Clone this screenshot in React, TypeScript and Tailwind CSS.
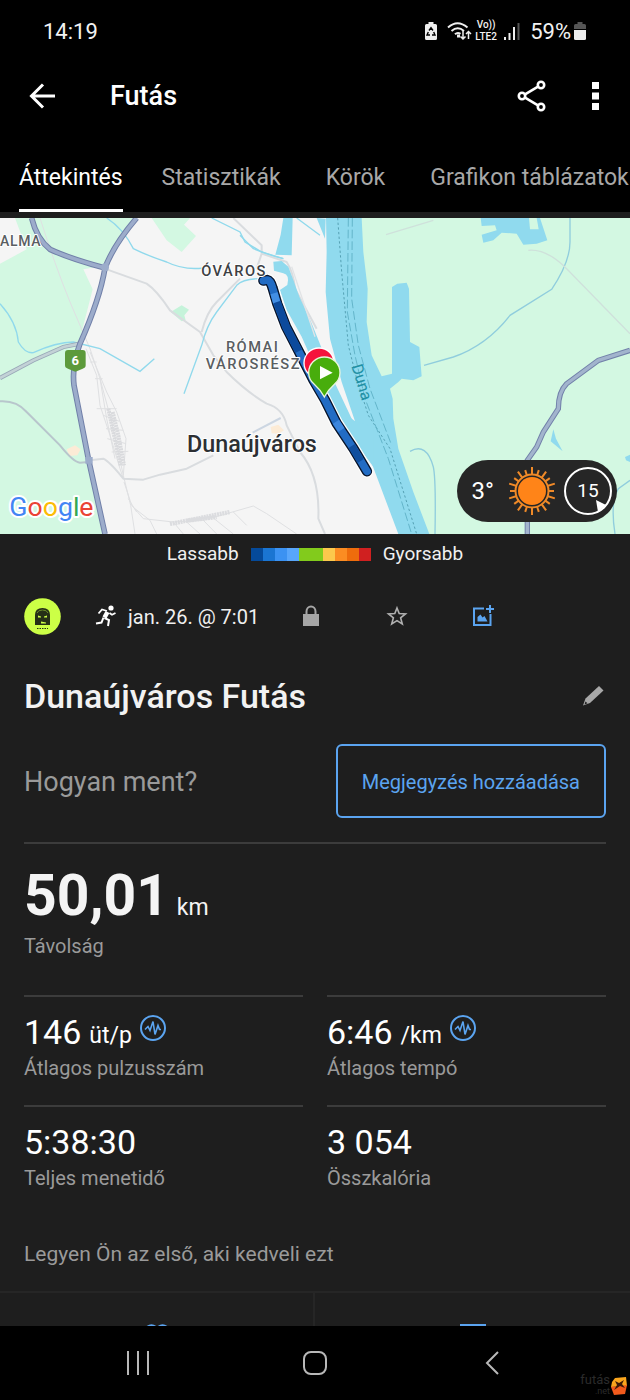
import React from "react";

const tabs = ["Áttekintés", "Statisztikák", "Körök", "Grafikon táblázatok"];

const paceColors = [
    "bg-[#054a9a]",
    "bg-[#1a75d2]",
    "bg-[#3b92f2]",
    "bg-[#58a6fb]",
    "bg-[#82cb1c]",
    "bg-[#82cb1c]",
    "bg-[#fcc84c]",
    "bg-[#fb8c22]",
    "bg-[#ee6c0c]",
    "bg-[#d02020]",
];

const stats = [
    { value: "146", unit: "üt/p", label: "Átlagos pulzusszám", chart: true },
    { value: "6:46", unit: "/km", label: "Átlagos tempó", chart: true },
    { value: "5:38:30", label: "Teljes menetidő" },
    { value: "3 054", label: "Összkalória" },
];

const StatusBar = () => (
    <div className="flex h-[62px] shrink-0 items-center justify-between pl-[43px] pr-[44px] text-[#f2f2f2]">
        <span className="text-[22px]">14:19</span>
        <div className="flex items-center">
            <svg className="mr-2.5 h-5 w-3" viewBox="0 0 12 20">
                <path d="M3.500 1h5v2h2q1.500 0 1.500 1.500v13q0 1.500-1.500 1.500h-9Q0 19 0 17.500v-13Q0 3 1.500 3h2z" fill="#eee" />
                <path d="M4 9.500 6 6.800l2 2.700M3.300 11l-1.300 3h3M8.700 11l1.300 3h-3" fill="none" stroke="#000" strokeWidth="1.400" />
            </svg>
            <svg className="h-5 w-[25px]" viewBox="0 0 25 20" fill="none" stroke="#eee" strokeWidth="2">
                <path d="M1 6.500q9.500-8.500 19.500 0M4.500 10q6.300-5.400 12.500 0M8 13.300q2.500-2.500 5.500-.5" />
                <path d="M10 15h3" strokeWidth="3" />
                <path d="M16 10v8m-2.500-2.500L16 18l2.500-2.500M21.500 18v-7.500m-2.500 2.500 2.500-2.500L24 13" strokeWidth="1.500" />
            </svg>
            <div className="mr-1.5 ml-0.5 flex w-6 flex-col items-center text-[10px] leading-3 font-medium">
                <span>Vo))</span>
                <span>LTE2</span>
            </div>
            <svg className="mr-2.5 h-[18px] w-4" viewBox="0 0 16 18" fill="#eee">
                <path d="M0 15h2v3H0zM4.500 11h2v7h-2zM9 5h2v13H9z" />
                <path d="M13.500 1h2v17h-2z" fill="#555" />
            </svg>
            <span className="mr-[3px] text-[22px]">59%</span>
            <svg className="h-5 w-3" viewBox="0 0 12 20">
                <path d="M3.500 1h5v2h2Q12 3 12 4.500V8H0V4.500Q0 3 1.500 3h2z" fill="#555" />
                <path d="M0 9h12v8.500q0 1.500-1.500 1.500h-9Q0 19 0 17.500z" fill="#eee" />
            </svg>
        </div>
    </div>
);

const Header = () => (
    <header className="flex h-[68px] shrink-0 items-center pr-[31px] pl-[29px]">
        <button aria-label="Vissza">
            <svg className="h-7 w-[26px]" viewBox="0 0 26 28" fill="none" stroke="#fff" strokeWidth="3">
                <path d="M26 14H3M14 2.500 2.500 14 14 25.500" />
            </svg>
        </button>
        <h1 className="ml-[55px] flex-1 text-[27px] font-medium">Futás</h1>
        <button aria-label="Megosztás">
            <svg className="h-8 w-[30px]" viewBox="0 0 30 32" fill="none" stroke="#fff" strokeWidth="2.600">
                <circle cx="5" cy="16" r="3.200" />
                <circle cx="24" cy="5" r="3.200" />
                <circle cx="24" cy="27" r="3.200" />
                <path d="M8 14.300 21 6.700M8 17.700 21 25.300" />
            </svg>
        </button>
        <button aria-label="Továbbiak" className="ml-[45px]">
            <svg className="h-7 w-[7px]" viewBox="0 0 7 28" fill="#fff">
                <path d="M0 0h7v7H0zM0 10.500h7v7H0zM0 21h7v7H0z" />
            </svg>
        </button>
    </header>
);

const TabBar = () => (
    <nav className="flex h-[82px] shrink-0 gap-[45px] overflow-hidden pl-[19px]">
        {tabs.map((tab, i) => (
            <button
                key={tab}
                className={`h-full shrink-0 border-b-[3px] pt-[18px] text-[23px] whitespace-nowrap ${
                    i === 0 ? "-mr-1.5 border-white text-white" : "border-transparent text-[#a8a8a8]"
                }`}
            >
                {tab}
            </button>
        ))}
    </nav>
);

const RouteMap = () => (
    <svg className="block h-[316px] w-full" viewBox="0 0 1890 948" preserveAspectRatio="xMidYMid slice" fill="none">
        <rect width="1890" height="948" fill="#f5f5f5" />

        {/* west side: fields, parks, roads */}
        <g transform="translate(0 -18)">
            <path d="M45 18H410L320 160 250 172 278 232 235 400 222 520 315 966H0V155L80 112z" fill="#d3f8e2" />
            <path d="M455 18H570L552 38 588 72 545 120 500 85z" fill="#d3f8e2" />
            <path d="M512 300 545 280 567 293 553 310 557 325 545 328z" fill="#c5f3da" />
            <path d="M200 712 225 700 242 712 232 730 208 732zM812 645 835 638 852 655 835 665 815 664z" fill="#fcebd6" />

            <g stroke="#dfe0e2" strokeWidth="3">
                <path d="M120 18Q165 160 210 270L270 410 300 500 335 630 370 790 392 880 405 966" />
                <path d="M258 410 290 490 300 580 330 670 360 770 370 800M270 420 320 540 350 600 378 680 370 790M300 500 320 620 345 740M290 590 350 590M310 610 358 628M318 650 370 655M322 680 378 695M335 720 385 718M270 450H290M285 500H308" />
                <path d="M372 810 395 880 430 920 520 930 610 925 760 882 800 905 890 966M405 890 450 925 470 966M520 930 550 966M560 930 600 966M610 925 650 966M640 918 700 966M700 900 740 940M385 860 410 900" />
            </g>
            <path d="M325 590 340 660 362 760M338 600 355 670 372 760" stroke="#d9dadd" strokeWidth="12" strokeDasharray="6 2" />
            <path d="M510 936 600 918 690 900M560 926 650 915" stroke="#dbdcdf" strokeWidth="13" strokeDasharray="6 2" />

            <g stroke="#d9dcdf" strokeWidth="6" strokeLinejoin="round">
                <path d="M320 172 440 215Q470 235 510 295L600 360 640 430 680 480Q740 540 800 575 850 590 860 640L900 720Q960 790 955 920L975 966" />
                <path d="M605 360Q620 300 650 270L720 200M785 125 770 170M700 18 785 100V125L860 150Q880 180 885 230L950 350" />
                <path d="M270 745 310 740Q330 750 370 800L430 803 480 788 560 770 640 730" />
            </g>
            <path d="M758 662 842 618" stroke="#ccd6e2" strokeWidth="6" />
            <path d="M0 568Q50 565 80 600L180 700Q220 750 240 752L265 750" stroke="#b8c6cc" strokeWidth="6" />

            <g stroke="#90d9ec" strokeWidth="4">
                <path d="M320 18Q370 50 400 110 440 130 500 150 550 175 610 168" />
                <path d="M0 275Q50 330 55 390 75 425 100 422 170 390 220 390L300 410 420 478 463 440" />
                <path d="M780 200Q730 200 710 220L650 300Q620 340 605 400L552 545M635 18 720 60 735 90 785 120 850 140" />
                <path d="M850 140Q810 130 760 110L720 70M890 18 960 70" />
            </g>

            <path d="M0 498 100 445 190 405 240 395" stroke="#98a7b7" strokeWidth="13" />
            <path d="M0 498 100 445 190 405 240 395" stroke="#c3d2d6" strokeWidth="8" />
            <path d="M95 18Q110 80 150 112 210 140 315 168M410 18Q340 100 315 168 300 260 240 395 215 460 222 520L265 740 315 966" stroke="#7180a9" strokeWidth="17" />
            <path d="M95 18Q110 80 150 112 210 140 315 168M410 18Q340 100 315 168 300 260 240 395 215 460 222 520L265 740 315 966" stroke="#9caccb" strokeWidth="11" />
            <circle cx="315" cy="166" r="12" fill="#9caccb" />
            <path d="M256 735 278 735 278 755 256 755z" fill="#9caccb" />
        </g>

        {/* east bank and the river */}
        <g transform="translate(930 -18)">
            <path d="M100 18H960V966H300L160 640 120 480 100 300z" fill="#d3f8e2" />
            <path
                d="M48 18 50 120 47 240 60 380 95 510 135 628 100 600 180 740 265 966H358L310 840 265 710 250 620 248 560 240 530 265 510 275 500 310 505 335 493 328 405 300 390 297 230 290 212 262 215 246 225V485L215 493 185 430 170 330 173 230 160 120 155 18z"
                fill="#90daee"
            />
            <path d="M512 18H690L712 85 680 95 640 98 620 65 575 62 550 85 520 92 515 68 560 55 555 40 515 42z" fill="#90daee" />
            <path d="M657 18H680L686 52H660z" fill="#d3f8e2" />
            <path d="M730 652 738 680 758 718 722 688zM945 735 960 728V750L948 745z" fill="#90daee" />
            <path d="M780 18V90Q780 150 725 232L600 310Q530 400 430 435L342 460M960 805 925 830Q900 870 915 966M300 718Q350 690 370 765 378 800 375 966" stroke="#90cddd" strokeWidth="4" />
            <path d="M655 115Q710 110 770 170L960 365M228 68 370 25" stroke="#cfe1db" strokeWidth="4" />
            <path d="M83 18 95 180 115 400 140 500 175 610 240 710 320 966" stroke="#55a1b4" strokeWidth="3" strokeDasharray="7 7" />
            <path d="M115 18 112 300 135 430 165 560 235 740 305 966M127 18 125 260 145 400 180 530 245 700" stroke="#63b5ca" strokeWidth="3" strokeDasharray="26 9" />
            <path d="M960 415 865 445 770 515Q745 540 745 590L700 660 680 705 652 745V966" stroke="#7180a9" strokeWidth="16" />
            <path d="M960 415 865 445 770 515Q745 540 745 590L700 660 680 705 652 745V966" stroke="#a2b4cd" strokeWidth="10" />
            <path d="M20 18 45 80 47 20z" fill="#90daee" />
        </g>
        <path d="M850 0H878L875 112 826 110 842 50z" fill="#90daee" />

        {/* harbour and the recorded track */}
        <g transform="translate(690 126)">
            <path d="M130 5 155 3 175 20 190 60 208 110 245 190 275 265 315 370 368 482 430 500V620L370 540 290 400 215 230 170 150 150 90 172 75Q180 45 160 40L132 32z" fill="#90daee" />
            <path d="M185 20 215 110 255 230" stroke="#e2e4e6" strokeWidth="4" />
            <path d="M100 62 112 60Q122 62 128 85L142 132 168 200 212 285 250 360 285 420 320 490 370 565 411 634" stroke="#fff" strokeWidth="38" strokeLinejoin="round" strokeLinecap="round" />
            <path d="M100 62 112 60Q122 62 128 85L142 132 168 200 212 285 250 360 285 420 320 490 370 565 411 634" stroke="#08142a" strokeWidth="31" strokeLinejoin="round" strokeLinecap="round" />
            <path d="M100 62 112 60Q122 62 128 85L142 132 168 200 212 285 250 360 285 420 320 490 370 565 411 634" stroke="#226cc4" strokeWidth="23" strokeLinejoin="round" strokeLinecap="round" />
            <path d="M132 100 140 128" stroke="#428ee4" strokeWidth="22" />
            <path d="M141 126 168 200 206 274" stroke="#0c4a9c" strokeWidth="23" />
            <path d="M318 485 334 510" stroke="#3c86de" strokeWidth="22" />
            <path d="M365 558 392 603" stroke="#104f9f" strokeWidth="22" />
            <circle cx="267" cy="309" r="47" fill="#fff" />
            <circle cx="267" cy="309" r="43" fill="#f5133c" />
            <path d="M283 411Q272 390 252 372 236 358 236 338A47 47 0 0 1 330 338Q330 358 314 372 294 390 283 411z" fill="#48ad0c" stroke="#e9f6df" strokeWidth="4" />
            <path d="M270 318 308 338 270 358z" fill="#fff" />
        </g>

        <path d="M204 396H248Q257 396 257 406V442Q257 450 248 452L230 460Q226 462 222 460L204 452Q195 450 195 442V406Q195 396 204 396z" fill="#5c9a3b" />
        <g className="font-medium" fontFamily="Roboto, sans-serif" fill="#5a5e62" stroke="#fff" strokeWidth="6" paintOrder="stroke" strokeLinejoin="round">
            <text x="226" y="441" fontSize="39" textAnchor="middle" fill="#fff" stroke="none" fontWeight="700">6</text>
            <text x="0" y="84" fontSize="42" className="tracking-wider">ALMA</text>
            <text x="702" y="173" fontSize="44" textAnchor="middle" fill="#3c4043" className="tracking-widest">ÓVÁROS</text>
            <text x="758" y="401" fontSize="44" textAnchor="middle" className="tracking-widest">RÓMAI</text>
            <text x="760" y="453" fontSize="44" textAnchor="middle" className="tracking-widest">VÁROSRÉSZ</text>
            <text x="756" y="703" fontSize="70" textAnchor="middle" fill="#2c2f33">Dunaújváros</text>
            <text transform="translate(1054 444) rotate(73)" fontSize="48" fill="#2190a4" stroke="none" className="font-normal">Duna</text>
            <text x="28" y="895" fontSize="80" strokeWidth="12" className="font-normal">
                <tspan fill="#4285f4">G</tspan>
                <tspan fill="#ea4335">o</tspan>
                <tspan fill="#fbbc05">o</tspan>
                <tspan fill="#4285f4">g</tspan>
                <tspan fill="#34a853">l</tspan>
                <tspan fill="#ea4335">e</tspan>
            </text>
        </g>
    </svg>
);

const sunRays = Array.from({ length: 20 }, (_, i) => i * 18);

const WeatherBadge = () => (
    <div className="absolute right-[13px] bottom-3 flex h-[62px] w-40 items-center justify-end gap-2 rounded-full bg-[#262626] pr-[5px] text-white">
        <span className="text-2xl">3°</span>
        <svg className="ml-1.5 h-12 w-12" viewBox="0 0 48 48" fill="none" stroke="#f08a28" strokeWidth="2">
            <circle cx="24" cy="24" r="14" fill="#ff8418" stroke="none" />
            <circle cx="24" cy="24" r="16.500" />
            {sunRays.map((angle) => (
                <path key={angle} d={angle % 36 === 0 ? "M24 8V0" : "M24 8V2"} transform={`rotate(${angle} 24 24)`} />
            ))}
        </svg>
        <div className="relative flex h-12 w-12 items-center justify-center text-[19px]">
            <svg className="absolute inset-0 h-12 w-12" viewBox="0 0 48 48" fill="none">
                <circle cx="24" cy="24" r="23" stroke="#fff" strokeWidth="2" />
                <path d="M32 33 42 38 34 45z" fill="#fff" />
            </svg>
            15
        </div>
    </div>
);

const PaceLegend = () => (
    <div className="flex h-10 items-center justify-center gap-3 text-[19px] text-[#f0f0f0]">
        <span>Lassabb</span>
        <div className="flex h-[13px]">
            {paceColors.map((color, i) => (
                <span key={i} className={`w-3 ${color}`} />
            ))}
        </div>
        <span>Gyorsabb</span>
    </div>
);

const ActivityMeta = () => (
    <div className="flex h-[84px] items-center px-6">
        <svg className="h-[37px] w-[37px]" viewBox="0 0 37 37">
            <circle cx="18.500" cy="18.500" r="18.300" fill="#ccff46" />
            <path d="M11 27V17q0-7 7.500-7t7.500 7v10z" fill="#253016" />
            <path d="M13 15q1-3 5.500-3t5.500 3" fill="none" stroke="#6b8a2c" />
            <path d="M14 17.500l3 1v1h-3zM23 17.500l-3 1v1h3zM17 23.500l5 1v1h-5z" fill="#ccff46" />
            <path d="M13 30.500h11" stroke="#253016" strokeWidth="1.200" strokeDasharray="1.500 1" />
        </svg>
        <svg className="ml-[34px] h-[22px] w-[22px]" viewBox="0 0 22 22" fill="none" stroke="#fff" strokeWidth="1.800">
            <circle cx="16" cy="3" r="2.600" fill="#fff" stroke="none" />
            <path d="M3.500 8.500 7 4.500 12 6M14.500 8 17 9.800 20.500 8" />
            <path d="M12.500 7 9.500 12.500" strokeWidth="4.500" />
            <path d="M9.500 13 14 15 13 21M8.500 12.500 6.500 17.500 1 18.500" strokeWidth="2" />
        </svg>
        <span className="ml-[11px] w-[172px] pt-0.5 text-xl text-[#f0f0f0]">jan. 26. @ 7:01</span>
        <button aria-label="Adatvédelem" className="w-[22px]">
            <svg className="h-[22px] w-[22px]" viewBox="0 0 22 22">
                <path d="M6.500 10V6.500a4.500 5 0 0 1 9 0V10" fill="none" stroke="#a6a6a6" strokeWidth="2" />
                <path d="M3 9h16v12H3z" fill="#a6a6a6" />
            </svg>
        </button>
        <button aria-label="Kedvenc" className="ml-16 w-[22px]">
            <svg className="h-[22px] w-[22px]" viewBox="0 0 22 22" fill="none" stroke="#b0b0b0" strokeWidth="1.600">
                <path d="M11 3 13.200 8.500 19.500 9 14.600 12.800 16.300 19 11 15.600 5.700 19 7.400 12.800 2.500 9 8.800 8.500z" />
            </svg>
        </button>
        <button aria-label="Fénykép hozzáadása" className="ml-16 w-[22px]">
            <svg className="h-[22px] w-[22px]" viewBox="0 0 22 22" fill="none" stroke="#5ba4f0" strokeWidth="2">
                <path d="M12 3.500H2v16.500h16.500V9M18 0v8M14 4H22" />
                <path d="M5.500 16.500V12l3-2.500 2 3 2-1.500 3 5.500z" fill="#5ba4f0" stroke="none" />
            </svg>
        </button>
    </div>
);

const ChartBadge = () => (
    <svg className="mt-[3px] ml-2 h-[26px] w-[26px]" viewBox="0 0 26 26" fill="none" stroke="#5ba4f0">
        <circle cx="13" cy="13" r="12" strokeWidth="2" />
        <path d="M5 14.500 8 11.500 10 15.500 13 6.500 15 19.500 18 10.500 19.500 14.500H21" strokeWidth="1.600" />
    </svg>
);

const BottomNav = () => (
    <nav className="relative grid h-[74px] shrink-0 grid-cols-3 items-center bg-black px-[50px]">
        <button aria-label="Legutóbbiak" className="flex justify-center">
            <svg className="h-6 w-[22px]" viewBox="0 0 22 24" fill="#b8b8b8">
                <path d="M0 0h2v24H0zM10 0h2v24h-2zM20 0h2v24h-2z" />
            </svg>
        </button>
        <button aria-label="Kezdőképernyő" className="flex justify-center">
            <svg className="h-[26px] w-[26px]" viewBox="0 0 26 26" fill="none" stroke="#b8b8b8" strokeWidth="2">
                <rect x="2" y="2" width="22" height="22" rx="7" />
            </svg>
        </button>
        <button aria-label="Vissza" className="flex justify-center">
            <svg className="h-6 w-3.5" viewBox="0 0 14 24" fill="none" stroke="#b8b8b8" strokeWidth="2">
                <path d="M13 1 2 12 13 23" />
            </svg>
        </button>
        <div className="absolute right-0.5 bottom-1 flex items-center text-[#2b2b2b]">
            <span className="text-right text-[13px] leading-[10px]">
                futás
                <br />
                <span className="text-[9px]">.net</span>
            </span>
            <svg className="h-[18px] w-[18px]" viewBox="0 0 18 18">
                <path d="M5 1 16 0 17 9 1 10 2 5z" fill="#f9a51d" />
                <path d="M1 10 17 8 15 17 4 18z" fill="#f15a1c" />
                <path d="M5 4 9 6 14 3 12 7 15 11 10 9 4 13 7 8z" fill="#3b1a08" />
            </svg>
        </div>
    </nav>
);

const App = () => {
    return (
        <div className="flex min-h-screen flex-col bg-black font-['Roboto',sans-serif] text-white">
            <StatusBar />
            <Header />
            <TabBar />

            <main className="flex flex-1 flex-col overflow-hidden bg-[#1e1e1e] pt-1.5">
                <div className="relative">
                    <RouteMap />
                    <WeatherBadge />
                </div>
                <PaceLegend />
                <ActivityMeta />

                <div className="flex h-[76px] items-center justify-between px-6">
                    <h2 className="text-[34px] font-medium text-[#f2f2f2]">Dunaújváros Futás</h2>
                    <button aria-label="Szerkesztés">
                        <svg className="h-6 w-6" viewBox="0 0 24 24">
                            <path d="M17 2 21.500 6.500 8 19 1 21.500 3.500 14.500z" fill="#a8a8a8" />
                            <path d="M3.500 17.500 5.500 19.300 2.500 20.500z" fill="#1e1e1e" />
                        </svg>
                    </button>
                </div>

                <div className="mx-6 flex items-center justify-between border-b-2 border-[#3c3c3c] pt-2.5 pb-6">
                    <span className="pt-0.5 text-[27px] text-[#9a9a9a]">Hogyan ment?</span>
                    <button className="h-[74px] rounded-md border-2 border-[#5ba4f0] px-6 pt-0.5 text-xl text-[#5ba4f0]">
                        Megjegyzés hozzáadása
                    </button>
                </div>

                <div className="px-6 pt-[18px]">
                    <p className="flex items-baseline gap-2 text-[57px] leading-[68px] font-bold text-[#f4f4f4]">
                        50,01
                        <span className="text-[23px] leading-8 font-normal">km</span>
                    </p>
                    <p className="pt-0.5 text-xl leading-7 text-[#9a9a9a]">Távolság</p>
                </div>

                <div className="mt-[35px] grid grid-cols-2 gap-x-6 px-6">
                    {stats.map((stat) => (
                        <div key={stat.label} className="h-[110px] border-t-2 border-[#3c3c3c] pt-[15px]">
                            <p className="flex h-10 items-start text-[34px] leading-10">
                                {stat.value}
                                {stat.unit && <span className="ml-2 pt-1 text-[23px] leading-10">{stat.unit}</span>}
                                {stat.chart && <ChartBadge />}
                            </p>
                            <p className="text-xl leading-8 text-[#9a9a9a]">{stat.label}</p>
                        </div>
                    ))}
                </div>

                <p className="mt-6 px-6 pt-px text-[21px] leading-7 text-[#9a9a9a]">Legyen Ön az első, aki kedveli ezt</p>

                <div className="mt-[23px] grid h-[35px] shrink-0 grid-cols-2 overflow-hidden border-t-2 border-[#262626]">
                    <button aria-label="Kedvelés" className="flex justify-center border-r-2 border-[#262626] pt-[31px]">
                        <svg className="h-6 w-[26px] shrink-0" viewBox="0 0 26 24" fill="none" stroke="#5ba4f0" strokeWidth="2">
                            <path d="M13 22 3 12Q0 7 3 3 8-1 13 4 18-1 23 3 26 7 23 12z" />
                        </svg>
                    </button>
                    <button aria-label="Hozzászólás" className="flex justify-center pt-[31px]">
                        <svg className="h-6 w-[26px] shrink-0" viewBox="0 0 26 24" fill="none" stroke="#5ba4f0" strokeWidth="2">
                            <path d="M1 1H25V18H8L1 23z" />
                        </svg>
                    </button>
                </div>
            </main>

            <BottomNav />
        </div>
    );
};

export default App;
